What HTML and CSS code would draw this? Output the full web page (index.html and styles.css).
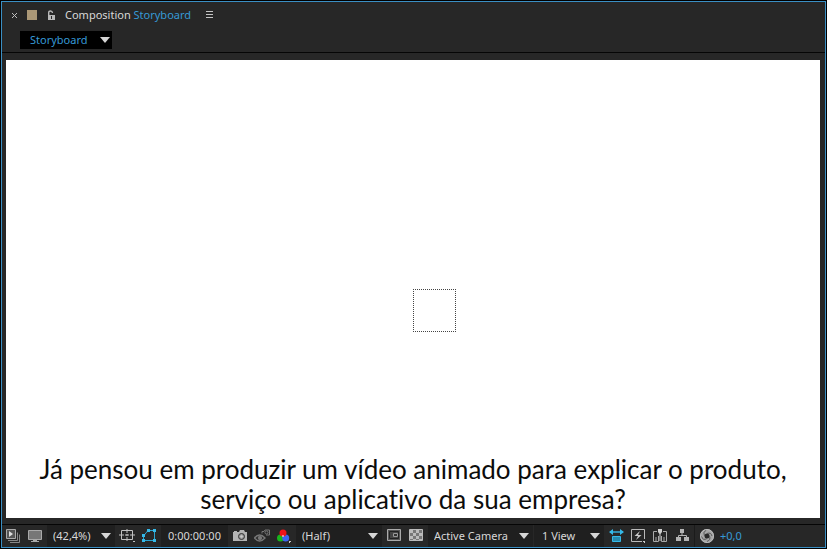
FILE: index.html
```html
<!DOCTYPE html>
<html lang="pt-BR">
<head>
<meta charset="utf-8">
<title>Composition Storyboard</title>
<link rel="stylesheet" href="styles.css">
</head>
<body>
<main class="panel">
  <header class="tab-bar">
    <button class="icon-btn close" aria-label="Close"><svg width="7" height="7" viewBox="0 0 7 7"><path d="M1 1l5 5M6 1L1 6" stroke="#bdbdbd" fill="none"/></svg></button>
    <span class="swatch"></span>
    <button class="icon-btn lock" aria-label="Lock"><svg width="9" height="11" viewBox="0 0 9 11"><path d="M1.700 5V2.500Q1.700 1 3.500 1T5.500 3" stroke="#b8b8b8" stroke-width="1.400" fill="none"/><path d="M1 5h7v5H1z" fill="#b8b8b8"/><path d="M4 6h1v3H4z" fill="#292929"/></svg></button>
    <h1 class="title">Composition <span class="accent">Storyboard</span></h1>
    <button class="icon-btn menu" aria-label="Panel menu"><svg width="7" height="8" viewBox="0 0 7 8"><path d="M0 .5h7M0 3.500h7M0 6.500h7" stroke="#c4c4c4"/></svg></button>
  </header>
  <nav class="crumbs">
    <button class="crumb">Storyboard<span class="arrow"></span></button>
  </nav>
  <section class="viewer">
    <div class="canvas">
      <div class="layer-box"></div>
      <p class="caption">Já pensou em produzir um vídeo animado para explicar o produto,<br>serviço ou aplicativo da sua empresa?</p>
    </div>
  </section>
  <footer class="toolbar">
    <div class="group">
      <button class="icon-btn" aria-label="Always preview"><svg width="16" height="16" viewBox="0 0 16 16"><path d="M5 14.500h9.500v-8M3 12.500h9.500v-8" stroke="#888" fill="none"/><path d="M1.500 1.500h9v9h-9z" fill="#555" stroke="#aaa"/><path d="M4 3l4 3-4 3z" fill="#ddd"/></svg></button>
      <button class="icon-btn" aria-label="Primary viewer"><svg width="16" height="16" viewBox="0 0 16 16"><path d="M1.500 2.500h13v9h-13z" fill="#777" stroke="#aaa"/><path d="M6 12h4v1h2v1H4v-1h2z" fill="#aaa"/></svg></button>
    </div>
    <label class="picker zoom"><select aria-label="Magnification"><option>(42,4%)</option></select><span class="arrow"></span></label>
    <div class="group">
      <button class="icon-btn" aria-label="Grid and guides"><svg width="16" height="16" viewBox="0 0 16 16" fill="none" stroke="#c2c2c2"><path d="M2.500 2.500h11v9h-11zM8 1v4M8 9v4M0 7h5M11 7h5M6 7h4M8 6v2"/><path d="M14 13h2v1h-2z" fill="#c2c2c2" stroke="none"/></svg></button>
      <button class="icon-btn" aria-label="Mask visibility"><svg width="16" height="16" viewBox="0 0 16 16"><path d="M2.500 12V8L7 2.500h6.500v10h-11" fill="none" stroke="#2ba3cf"/><path d="M1 11h3v3H1zM12 11h3v3h-3zM12 1h3v3h-3zM6 1h3v3H6zM1 6h3v3H1z" fill="#35b9e8"/></svg></button>
    </div>
    <button class="timecode">0:00:00:00</button>
    <div class="group">
      <button class="icon-btn" aria-label="Take snapshot"><svg width="16" height="16" viewBox="0 0 16 16"><path d="M1 4h1V3h3v1h2l1-2h4l1 2h2v9H1z" fill="#b4b4b4"/><circle cx="9.500" cy="8.500" r="3" fill="#999" stroke="#333"/><circle cx="9.500" cy="8.500" r="1.300" fill="#ccc"/></svg></button>
      <button class="icon-btn" aria-label="Show snapshot"><svg width="16" height="16" viewBox="0 0 16 16" fill="none" stroke="#777"><path d="M.5 10Q5.500 4 11 10Q5.500 16 .5 10z" stroke-width="1.400"/><circle cx="6" cy="10" r="1.800" fill="#777"/><path d="M8 3.500h2l1-1.500h4.500v5H12M8 3.500v2"/><circle cx="12.500" cy="4.500" r="1.500"/></svg></button>
      <button class="icon-btn" aria-label="Channels"><svg width="16" height="16" viewBox="0 0 16 16"><circle cx="4.500" cy="10" r="3.500" fill="#18b51c"/><circle cx="9.700" cy="10" r="3.500" fill="#3d65f2"/><circle cx="7" cy="5" r="3.500" fill="#f0141a"/><path d="M6 8l1-1 1 1-1 1z" fill="#fff"/><path d="M13 13h2v1h-1v1h-1z" fill="#ccc"/></svg></button>
    </div>
    <label class="picker resolution"><select aria-label="Resolution"><option>(Half)</option></select><span class="arrow"></span></label>
    <div class="group">
      <button class="icon-btn" aria-label="Region of interest"><svg width="16" height="16" viewBox="0 0 16 16"><path d="M1.500 1.500h13v11h-13z" fill="#555" stroke="#aaa"/><path d="M3.500 3.500h9v7h-9z" fill="#444" stroke="#222"/><path d="M7.500 5.500h4v3h-4z" fill="#333" stroke="#999"/></svg></button>
      <button class="icon-btn" aria-label="Transparency grid"><svg width="16" height="16" viewBox="0 0 16 16"><path d="M1.500 1.500h13v11h-13z" fill="#777" stroke="#bbb"/><path d="M2 2h3v3H2zM8 2h3v3H8zM5 5h3v3H5zM11 5h3v3h-3zM2 8h3v3H2zM8 8h3v3H8zM5 11h3v1H5zM11 11h3v1h-3z" fill="#bbb"/></svg></button>
    </div>
    <label class="picker camera"><select aria-label="3D view"><option>Active Camera</option></select><span class="arrow"></span></label>
    <label class="picker views"><select aria-label="View layout"><option>1 View</option></select><span class="arrow"></span></label>
    <div class="group">
      <button class="icon-btn" aria-label="Pixel aspect ratio"><svg width="16" height="16" viewBox="0 0 16 16" fill="none" stroke="#35b9e8"><path d="M2 4h13" stroke-width="1.400"/><path d="M5 1v6L1 4zM12 1v6l4-3z" fill="#35b9e8" stroke="none"/><path d="M4.500 8.500h8v5h-8z" fill="#258aad"/></svg></button>
      <button class="icon-btn" aria-label="Fast previews"><svg width="16" height="16" viewBox="0 0 16 16"><path d="M12 13.500H1.500v-12h13V11" fill="none" stroke="#bbb"/><path d="M10 3L4.500 8H8l-2 4 5.500-5H8z" fill="#ccc"/><path d="M13 13h2v2h-1v-1h-1z" fill="#ccc"/></svg></button>
      <button class="icon-btn" aria-label="Timeline"><svg width="16" height="16" viewBox="0 0 16 16"><path d="M5 3.500H1.500v10h5V8M9.500 8v5.500h5v-10H11" fill="none" stroke="#aaa"/><path d="M4 9v4M12 9v4" stroke="#aaa"/><path d="M6 1h4v3L8.500 6v7h-1V6L6 4z" fill="#d0d0d0"/></svg></button>
      <button class="icon-btn" aria-label="Flowchart"><svg width="16" height="16" viewBox="0 0 16 16"><path d="M6 1h4v4H6zM2 9h5v4H2zM10 9h5v4h-5z" fill="#b4b4b4"/><path d="M8 5v2M4.500 9V7.500h8V9" stroke="#b4b4b4" fill="none"/></svg></button>
    </div>
    <div class="group exposure">
      <button class="icon-btn" aria-label="Reset exposure"><svg width="16" height="16" viewBox="0 0 16 16"><circle cx="8" cy="8" r="7" fill="#a6a6a6"/><circle cx="8" cy="8" r="2.500" fill="#292929"/><path d="M8 5.500Q12 4 13 8M10.500 8Q12 12 8 13.500M8 10.500Q4 13 2.500 8.500M5.500 8Q3.500 4.500 7 2" fill="none" stroke="#555"/><circle cx="8" cy="8" r="6.500" fill="none" stroke="#bbb"/></svg></button>
      <button class="exposure-value accent">+0,0</button>
    </div>
  </footer>
</main>
</body>
</html>
```
FILE: styles.css
```css
* {
  box-sizing: border-box;
}

body {
  margin: 0;
  background: #000;
  color: #d8d8d8;
  font: 11px/16px "Noto Sans", "Open Sans", sans-serif;
}

button,
select {
  margin: 0;
  padding: 0;
  border: 0;
  background: none;
  color: inherit;
  font: inherit;
}

.panel {
  display: flex;
  flex-direction: column;
  height: calc(100vh - 2px);
  margin: 1px;
  border: 1px solid #3a8fc4;
  background: #272727;
}

.accent {
  color: #3699d6;
}

.icon-btn {
  display: flex;
  align-items: center;
  justify-content: center;
  flex: none;
}

.arrow {
  width: 10px;
  height: 6px;
  background: #d6d6d6;
  clip-path: polygon(0 0, 100% 0, 50% 100%);
}

.tab-bar {
  display: flex;
  align-items: center;
  height: 26px;
  padding-left: 9px;
}

.swatch {
  width: 10px;
  height: 10px;
  margin: 0 10px 0 9px;
  background: #ab9877;
}

.title {
  margin: 0 15px 0 9px;
  font: inherit;
}

.crumbs {
  height: 25px;
  padding: 3px 18px;
  border-bottom: 1px solid #050505;
}

.crumb {
  display: flex;
  align-items: center;
  justify-content: space-between;
  width: 92px;
  height: 18px;
  padding: 0 2px 0 10px;
  background: #000;
  color: #3699d6;
}

.viewer {
  display: flex;
  flex: 1;
  min-height: 0;
  padding: 7px 5px 6px 4px;
}

.canvas {
  display: flex;
  flex: 1;
  align-items: flex-end;
  justify-content: center;
  position: relative;
  background: #fff;
}

.layer-box {
  position: absolute;
  top: 50%;
  left: 50%;
  width: 43px;
  height: 43px;
  border: 1px dotted #444;
}

.caption {
  margin: 0 0 4px;
  color: #0c0c0c;
  font: 26px/30px Lato, sans-serif;
  font-variant-ligatures: none;
  text-align: center;
  white-space: nowrap;
}

.toolbar {
  display: flex;
  gap: 1px;
  height: 23px;
  border-top: 1px solid #050505;
}

.group {
  display: flex;
}

.group .icon-btn {
  width: 22px;
}

.picker {
  display: flex;
  align-items: center;
  padding-right: 4px;
  background: #1f1f1f;
}

.picker select {
  flex: 1;
  min-width: 0;
  height: 100%;
  padding-left: 6px;
  appearance: none;
}

.zoom {
  width: 68px;
}

.resolution {
  width: 86px;
}

.camera {
  width: 105px;
}

.views {
  width: 70px;
}

.views select {
  padding-left: 8px;
}

.timecode {
  width: 67px;
  background: #1f1f1f;
}

.exposure {
  padding-left: 1px;
  border-left: 1px solid #1b1b1b;
}

.exposure-value {
  padding-left: 2px;
}
```
